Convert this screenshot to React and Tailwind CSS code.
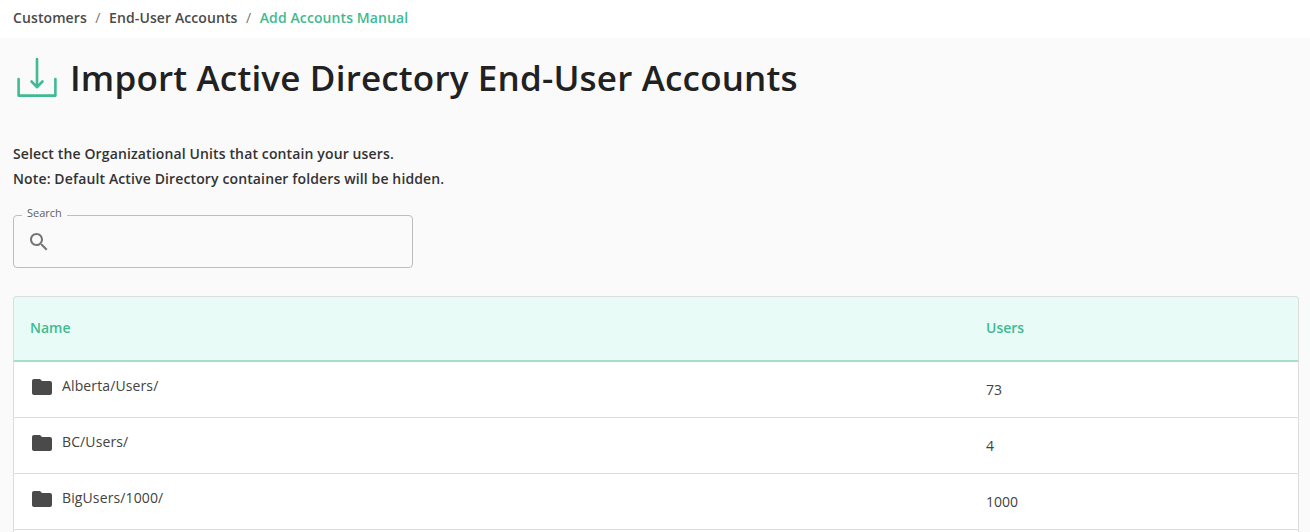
const rows = [
  { name: 'Alberta/Users/', users: 73 },
  { name: 'BC/Users/', users: 4 },
  { name: 'BigUsers/1000/', users: 1000 },
]

function FolderIcon() {
  return (
    <svg viewBox="0 0 24 24" className="w-6 h-6 shrink-0" fill="#4a4a4a">
      <path d="M10 4H4c-1.1 0-1.99.9-1.99 2L2 18c0 1.1.9 2 2 2h16c1.1 0 2-.9 2-2V8c0-1.1-.9-2-2-2h-8l-2-2z" />
    </svg>
  )
}

function SearchIcon() {
  return (
    <svg viewBox="0 0 24 24" className="w-6 h-6" fill="#757575">
      <path d="M15.5 14h-.79l-.28-.27C15.41 12.59 16 11.11 16 9.5 16 5.91 13.09 3 9.5 3S3 5.91 3 9.5 5.91 16 9.5 16c1.61 0 3.09-.59 4.23-1.57l.27.28v.79l5 4.99L20.49 19l-4.99-5zm-6 0C7.01 14 5 11.99 5 9.5S7.01 5 9.5 5 14 7.01 14 9.5 11.99 14 9.5 14z" />
    </svg>
  )
}

function ImportIcon() {
  return (
    <svg viewBox="0 0 42 42" fill="none" stroke="#3fba92" strokeWidth={2.6} strokeLinecap="round" strokeLinejoin="round" className="w-[42px] h-[42px] shrink-0">
      <path d="M2.6 22V38.6H39.4V22" />
      <path d="M21 2V30" />
      <path d="M15.5 24.5L21 30L26.5 24.5" />
    </svg>
  )
}

export default function App() {
  return (
    <div className="h-screen overflow-hidden bg-[#fafafa] font-['Open_Sans',sans-serif] text-[#212121]">
      <nav className="h-[38px] bg-white flex items-center px-[13px] pb-[3px] text-[14px] tracking-[0.1px] font-semibold text-[#4a4a4a]">
        <span>Customers</span>
        <span className="mx-[8.5px] font-normal text-[#757575]">/</span>
        <span>End-User Accounts</span>
        <span className="mx-[8.5px] font-normal text-[#757575]">/</span>
        <span className="text-[#3fba92]">Add Accounts Manual</span>
      </nav>

      <div className="px-[13px]">
        <div className="flex items-center gap-[12px] pl-[3px] h-[80px]">
          <ImportIcon />
          <h1 className="text-[35px] leading-none tracking-[0.18px] font-semibold text-[#212121] pb-[2px]">Import Active Directory End-User Accounts</h1>
        </div>

        <div className="mt-[23px] text-[14px] leading-[25px] tracking-[0.13px] font-semibold text-[#333333]">
          <p>Select the Organizational Units that contain your users.</p>
          <p>Note: Default Active Directory container folders will be hidden.</p>
        </div>

        <fieldset className="mt-[18px] w-[400px] h-[59px] border border-[#bdbdbd] rounded-[4px] pl-[13px] pb-[4px] flex items-center">
          <legend className="-ml-[5px] px-[5px] text-[11px] leading-[12px] text-[#616161] -translate-y-[2px]">Search</legend>
          <SearchIcon />
        </fieldset>

        <table className="mt-[28px] w-[1286px] table-fixed border-separate border-spacing-0 text-[14px]">
          <colgroup>
            <col className="w-[957px]" />
            <col />
          </colgroup>
          <thead>
            <tr className="bg-[#e9fbf6] text-[#3fba92] text-left">
              <th className="h-[66px] pl-[16px] pb-[3px] font-semibold border-t border-l border-[#dddddd] border-b-2 border-b-[#a6dfc9] rounded-tl-[4px]">Name</th>
              <th className="h-[66px] pl-[16px] pb-[3px] font-semibold border-t border-r border-[#dddddd] border-b-2 border-b-[#a6dfc9] rounded-tr-[4px]">Users</th>
            </tr>
          </thead>
          <tbody className="bg-white">
            {rows.map(row => (
              <tr key={row.name}>
                <td className="h-[56px] pl-[16px] border-l border-b border-[#dddddd]">
                  <div className="flex items-center gap-[8px] -translate-y-[3px]">
                    <FolderIcon />
                    <span className="-translate-y-px tracking-[0.12px] text-[#424242]">{row.name}</span>
                  </div>
                </td>
                <td className="h-[56px] pl-[16px] border-r border-b border-[#dddddd] text-[#424242]">{row.users}</td>
              </tr>
            ))}
            <tr>
              <td className="h-[56px] border-l border-[#dddddd]" />
              <td className="h-[56px] border-r border-[#dddddd]" />
            </tr>
          </tbody>
        </table>
      </div>
    </div>
  )
}
